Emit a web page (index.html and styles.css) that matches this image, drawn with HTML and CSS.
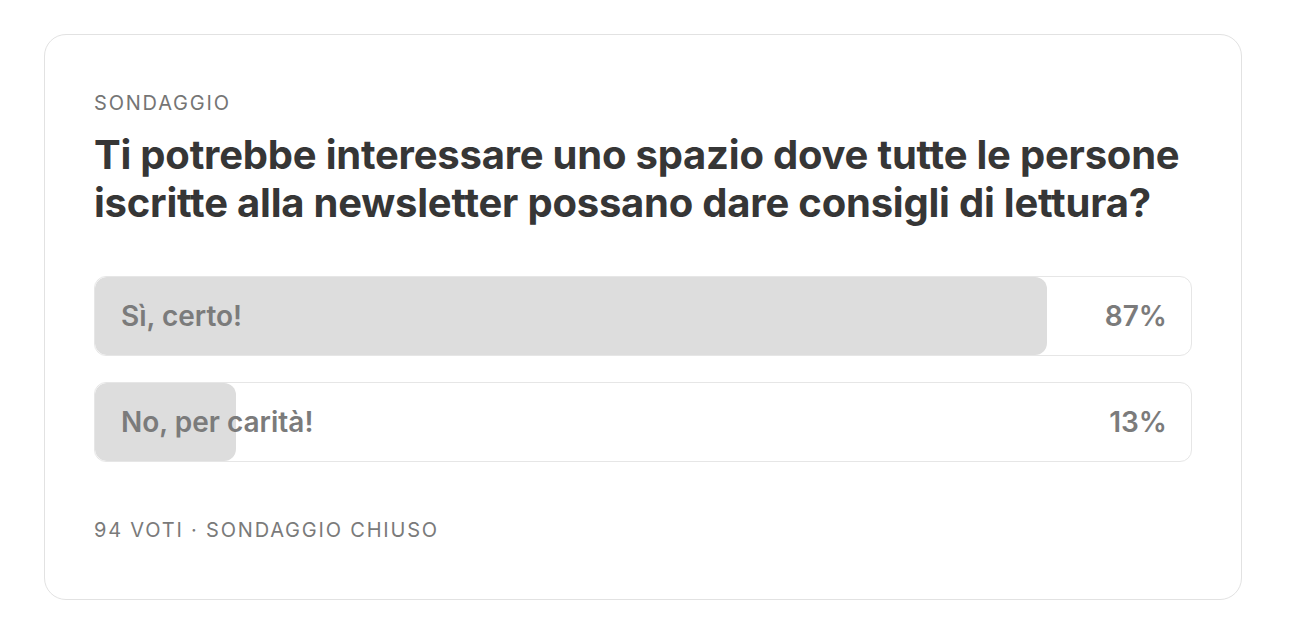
FILE: index.html
```html
<!DOCTYPE html>
<html lang="it">
<head>
<meta charset="utf-8">
<title>Sondaggio</title>
<link rel="stylesheet" href="styles.css">
</head>
<body>
<div class="poll">
  <div class="eyebrow">SONDAGGIO</div>
  <h1 class="question">Ti potrebbe interessare uno spazio dove tutte le persone iscritte alla newsletter possano dare consigli di lettura?</h1>
  <div class="options">
    <div class="option">
      <div class="fill" style="width: 86.9%"></div>
      <span class="label">Sì, certo!</span>
      <span class="pct">87%</span>
    </div>
    <div class="option">
      <div class="fill" style="width: 12.9%"></div>
      <span class="label">No, per carità!</span>
      <span class="pct">13%</span>
    </div>
  </div>
  <div class="footer">94 VOTI · SONDAGGIO CHIUSO</div>
</div>
</body>
</html>
```

FILE: styles.css
```css
* { box-sizing: border-box; }
html, body { margin: 0; background: #fff; }
body {
  font-family: Inter, "Noto Sans", sans-serif;
  padding: 34px 0 0 44px;
}
.poll {
  width: 1198px;
  height: 566px;
  border: 1px solid #e2e2e2;
  border-radius: 22px;
  padding: 56px 49px 0 49px;
  display: flex;
  flex-direction: column;
}
.eyebrow {
  font-size: 20px;
  line-height: 24px;
  letter-spacing: 1.8px;
  color: #757575;
}
.question {
  margin: 16px 0 0 0;
  font-size: 40px;
  line-height: 48px;
  font-weight: 700;
  color: #363636;
  letter-spacing: -0.22px;
}
.options {
  margin-top: 49px;
  display: flex;
  flex-direction: column;
  gap: 26px;
}
.option {
  position: relative;
  height: 80px;
  border: 1px solid #e6e6e6;
  border-radius: 12px;
  display: flex;
  align-items: center;
  justify-content: space-between;
  padding: 0 24px 0 26px;
  overflow: hidden;
}
.fill {
  position: absolute;
  left: 0;
  top: 0;
  bottom: 0;
  background: #dddddd;
  border-radius: 12px;
}
.label, .pct {
  position: relative;
  font-size: 28px;
  font-weight: 600;
  color: #7b7b7b;
}
.footer {
  margin-top: 56px;
  font-size: 20px;
  line-height: 24px;
  letter-spacing: 1.8px;
  color: #7a7a7a;
}
```
